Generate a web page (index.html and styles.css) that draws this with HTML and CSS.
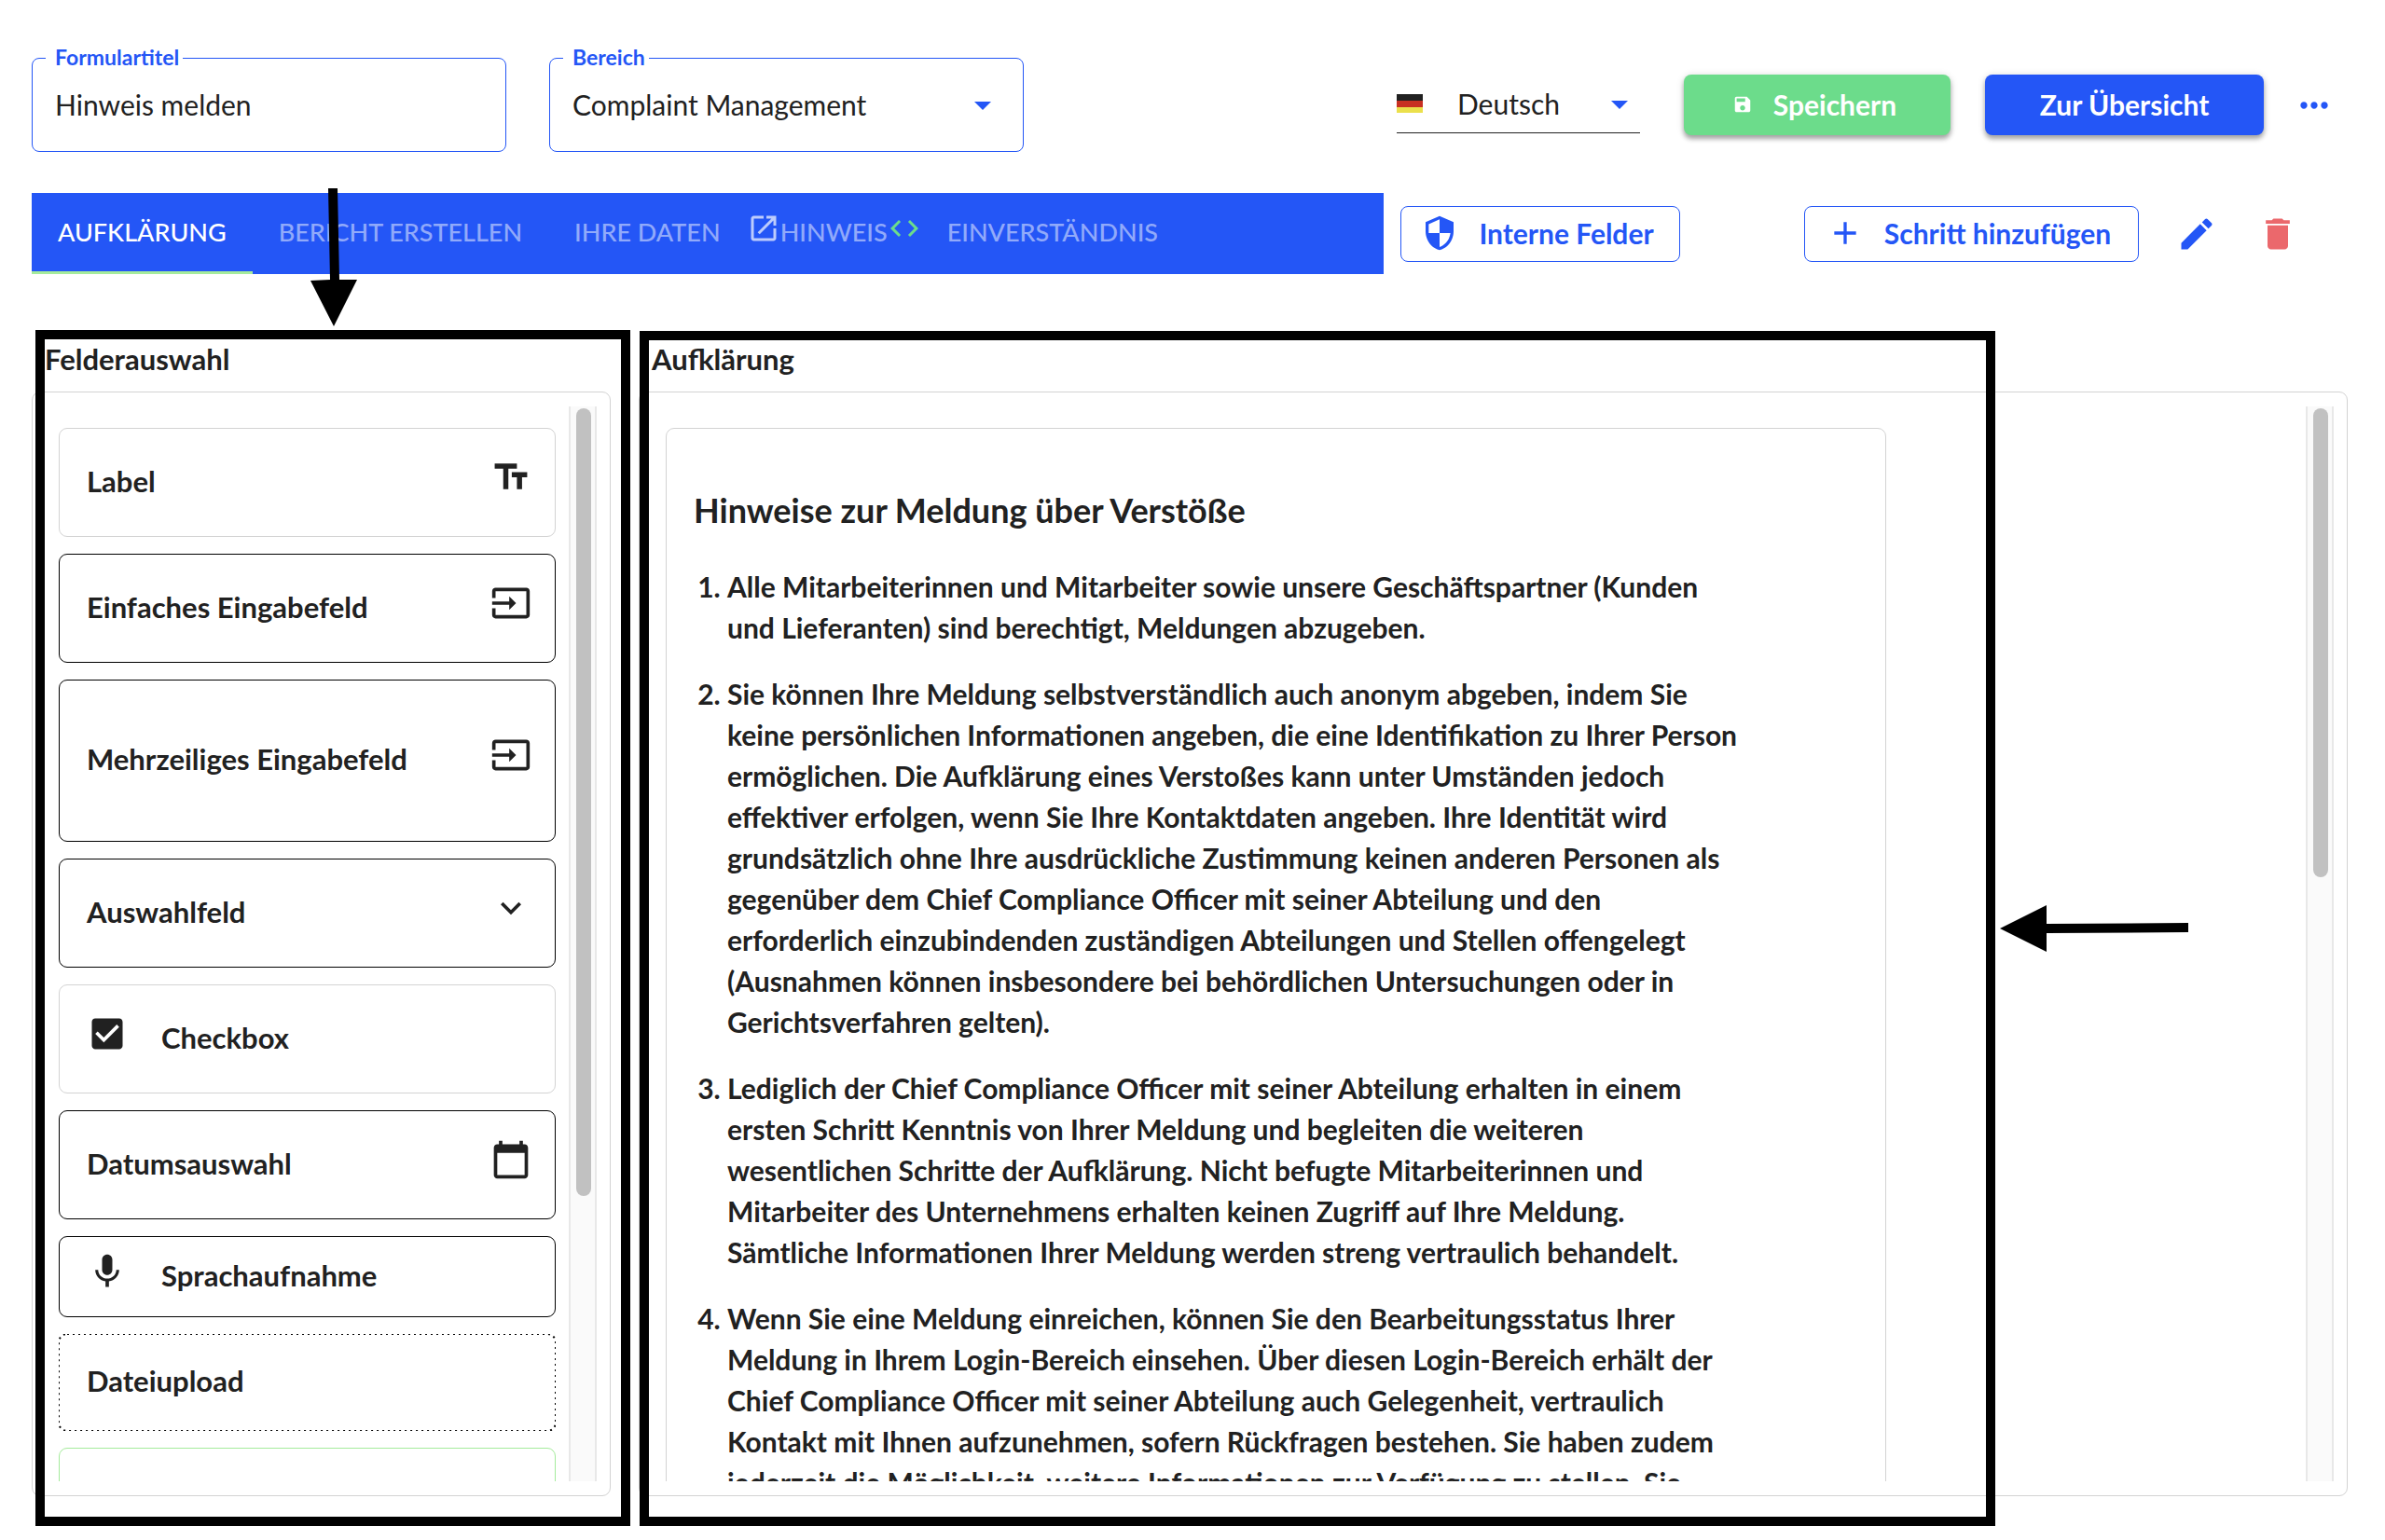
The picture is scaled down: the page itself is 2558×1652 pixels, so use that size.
FILE: index.html
```html
<!DOCTYPE html>
<html lang="de">
<head>
<meta charset="utf-8">
<title>Formular bearbeiten</title>
<link rel="stylesheet" href="styles.css">
</head>
<body>
<svg class="sprite" aria-hidden="true">
  <symbol id="i-input" viewBox="0 0 24 24"><path d="M21 3.01H3c-1.1 0-2 .9-2 2V9h2V4.99h18v14.03H3V15H1v4.01c0 1.1.9 1.98 2 1.98h18c1.1 0 2-.88 2-1.98v-14c0-1.11-.9-2-2-2zM11 16l4-4-4-4v3H1v2h10v3z"/></symbol>
</svg>
<div class="page">
  <header class="topbar">
    <div class="field">
      <label for="title">Formulartitel</label>
      <input id="title" type="text" value="Hinweis melden">
    </div>
    <div class="field field-select">
      <label for="area">Bereich</label>
      <select id="area"><option>Complaint Management</option></select>
    </div>
    <div class="language">
      <svg class="flag" viewBox="0 0 28 20"><path d="M0 0h28v7H0z"/><path fill="#c83022" d="M0 7h28v7H0z"/><path fill="#ebe04c" d="M0 14h28v6H0z"/></svg>
      <select aria-label="Sprache"><option>Deutsch</option></select>
    </div>
    <button class="btn btn-save" type="button">
      <svg viewBox="0 0 24 24"><path d="M17 3H5c-1.11 0-2 .9-2 2v14c0 1.1.89 2 2 2h14c1.1 0 2-.9 2-2V7l-4-4zm-5 16c-1.66 0-3-1.34-3-3s1.34-3 3-3 3 1.34 3 3-1.34 3-3 3zm3-10H5V5h10v4z"/></svg>
      Speichern
    </button>
    <button class="btn btn-primary" type="button">Zur Übersicht</button>
    <button class="icon-btn" type="button" aria-label="Mehr">
      <svg viewBox="0 0 24 24"><path d="M6 10c-1.100 0-2 .9-2 2s.9 2 2 2 2-.9 2-2-.9-2-2-2zm12 0c-1.100 0-2 .9-2 2s.9 2 2 2 2-.9 2-2-.9-2-2-2zm-6 0c-1.100 0-2 .9-2 2s.9 2 2 2 2-.9 2-2-.9-2-2-2z"/></svg>
    </button>
  </header>

  <div class="steps">
    <div class="tabs" role="tablist">
      <button class="tab active" role="tab" aria-selected="true" type="button">AUFKLÄRUNG</button>
      <button class="tab" role="tab" type="button">BERICHT ERSTELLEN</button>
      <button class="tab" role="tab" type="button">IHRE DATEN</button>
      <button class="tab tab-icons" role="tab" type="button">
        <svg viewBox="0 0 24 24"><path d="M19 19H5V5h7V3H5c-1.110 0-2 .9-2 2v14c0 1.100.89 2 2 2h14c1.100 0 2-.9 2-2v-7h-2v7zM14 3v2h3.590l-9.830 9.830 1.410 1.410L19 6.410V10h2V3h-7z"/></svg>
        <span>HINWEIS</span>
        <svg class="code" viewBox="0 0 24 24"><path d="M9.400 16.600L4.800 12l4.600-4.600L8 6l-6 6 6 6 1.400-1.400zm5.200 0l4.600-4.600-4.600-4.600L16 6l6 6-6 6-1.400-1.400z"/></svg>
      </button>
      <button class="tab" role="tab" type="button">EINVERSTÄNDNIS</button>
    </div>
    <button class="btn btn-outline btn-internal" type="button">
      <svg viewBox="0 0 24 24"><path d="M12 1L3 5v6c0 5.550 3.840 10.740 9 12 5.160-1.260 9-6.450 9-12V5l-9-4zm0 10.990h7c-.53 4.120-3.280 7.790-7 8.940V12H5V6.300l7-3.110v8.800z"/></svg>
      Interne Felder
    </button>
    <button class="btn btn-outline btn-add" type="button">
      <svg viewBox="0 0 24 24"><path d="M19 13h-6v6h-2v-6H5v-2h6V5h2v6h6v2z"/></svg>
      Schritt hinzufügen
    </button>
    <button class="icon-btn" type="button" aria-label="Schritt bearbeiten">
      <svg viewBox="0 0 24 24"><path d="M3 17.250V21h3.750L17.810 9.940l-3.750-3.750L3 17.250zM20.710 7.040c.39-.39.39-1.020 0-1.410l-2.340-2.340c-.39-.39-1.020-.39-1.410 0l-1.830 1.830 3.750 3.750 1.830-1.830z"/></svg>
    </button>
    <button class="icon-btn danger" type="button" aria-label="Schritt löschen">
      <svg viewBox="0 0 24 24"><path d="M6 19c0 1.100.9 2 2 2h8c1.100 0 2-.9 2-2V7H6v12zM19 4h-3.500l-1-1h-5l-1 1H5v2h14V4z"/></svg>
    </button>
  </div>

  <main class="editor">
    <section class="column palette">
      <h2>Felderauswahl</h2>
      <div class="panel">
        <div class="scroll">
          <div class="card soft"><span>Label</span><svg viewBox="0 0 24 24"><path d="M2.500 4v3h5v12h3V7h5V4h-13zm19 5h-9v3h3v7h3v-7h3V9z"/></svg></div>
          <div class="card"><span>Einfaches Eingabefeld</span><svg><use href="#i-input"/></svg></div>
          <div class="card tall"><span>Mehrzeiliges Eingabefeld</span><svg><use href="#i-input"/></svg></div>
          <div class="card"><span>Auswahlfeld</span><svg viewBox="0 0 24 24"><path d="M7.410 8.590L12 13.170l4.590-4.580L18 10l-6 6-6-6 1.410-1.410z"/></svg></div>
          <div class="card soft lead"><svg viewBox="0 0 24 24"><path d="M19 3H5c-1.110 0-2 .9-2 2v14c0 1.100.89 2 2 2h14c1.110 0 2-.9 2-2V5c0-1.100-.89-2-2-2zm-9 14l-5-5 1.410-1.410L10 14.170l7.590-7.590L19 8l-9 9z"/></svg><span>Checkbox</span></div>
          <div class="card"><span>Datumsauswahl</span><svg viewBox="0 0 24 24"><path d="M20 3h-1V1h-2v2H7V1H5v2H4c-1.100 0-2 .9-2 2v16c0 1.100.9 2 2 2h16c1.100 0 2-.9 2-2V5c0-1.100-.9-2-2-2zm0 18H4V8h16v13z"/></svg></div>
          <div class="card short lead"><svg viewBox="0 0 24 24"><path d="M12 14c1.660 0 2.990-1.340 2.990-3L15 5c0-1.660-1.340-3-3-3S9 3.340 9 5v6c0 1.660 1.340 3 3 3zm5.300-3c0 3-2.540 5.100-5.300 5.100S6.700 14 6.700 11H5c0 3.410 2.720 6.230 6 6.720V21h2v-3.280c3.280-.48 6-3.300 6-6.720h-1.700z"/></svg><span>Sprachaufnahme</span></div>
          <div class="card upload"><svg class="dots"><rect width="100%" height="100%" rx="9"/></svg><span>Dateiupload</span></div>
          <div class="card accent"></div>
        </div>
        <div class="scrollbar"><div class="thumb" style="height: 73.5%"></div></div>
      </div>
      <div class="frame"></div>
    </section>

    <section class="column preview">
      <h2>Aufklärung</h2>
      <div class="panel">
        <div class="scroll">
          <article class="notice">
            <h3>Hinweise zur Meldung über Verstöße</h3>
            <ol>
              <li>Alle Mitarbeiterinnen und Mitarbeiter sowie unsere Geschäftspartner (Kunden<br>und Lieferanten) sind berechtigt, Meldungen abzugeben.</li>
              <li>Sie können Ihre Meldung selbstverständlich auch anonym abgeben, indem Sie<br>keine persönlichen Informationen angeben, die eine Identifikation zu Ihrer Person<br>ermöglichen. Die Aufklärung eines Verstoßes kann unter Umständen jedoch<br>effektiver erfolgen, wenn Sie Ihre Kontaktdaten angeben. Ihre Identität wird<br>grundsätzlich ohne Ihre ausdrückliche Zustimmung keinen anderen Personen als<br>gegenüber dem Chief Compliance Officer mit seiner Abteilung und den<br>erforderlich einzubindenden zuständigen Abteilungen und Stellen offengelegt<br>(Ausnahmen können insbesondere bei behördlichen Untersuchungen oder in<br>Gerichtsverfahren gelten).</li>
              <li>Lediglich der Chief Compliance Officer mit seiner Abteilung erhalten in einem<br>ersten Schritt Kenntnis von Ihrer Meldung und begleiten die weiteren<br>wesentlichen Schritte der Aufklärung. Nicht befugte Mitarbeiterinnen und<br>Mitarbeiter des Unternehmens erhalten keinen Zugriff auf Ihre Meldung.<br>Sämtliche Informationen Ihrer Meldung werden streng vertraulich behandelt.</li>
              <li>Wenn Sie eine Meldung einreichen, können Sie den Bearbeitungsstatus Ihrer<br>Meldung in Ihrem Login-Bereich einsehen. Über diesen Login-Bereich erhält der<br>Chief Compliance Officer mit seiner Abteilung auch Gelegenheit, vertraulich<br>Kontakt mit Ihnen aufzunehmen, sofern Rückfragen bestehen. Sie haben zudem<br>jederzeit die Möglichkeit, weitere Informationen zur Verfügung zu stellen. Sie</li>
            </ol>
          </article>
        </div>
        <div class="scrollbar"><div class="thumb" style="height: 43.8%"></div></div>
      </div>
      <div class="frame"></div>
    </section>
  </main>

  <svg class="arrow arrow-down" viewBox="0 0 50 148"><path d="M19 0h10l2 98h19L25 148 0 99l21-1z"/></svg>
  <svg class="arrow arrow-left" viewBox="0 0 202 50"><path d="M0 25L50 0v20l152-1v10l-152 1v20z"/></svg>
</div>
</body>
</html>
```

FILE: styles.css
```css
* {
  box-sizing: border-box;
}

:root {
  --blue: #2456f6;
  --ink: #212121;
  --line: #d3d3d3;
}

body {
  margin: 0;
  background: #fff;
  color: var(--ink);
  font-family: Lato, "Open Sans", sans-serif;
  font-size: 30px;
  line-height: 44px;
}

button,
input,
select {
  font: inherit;
  color: inherit;
}

button {
  cursor: pointer;
}

svg {
  fill: currentColor;
  flex: none;
}

.sprite {
  position: absolute;
  width: 0;
  height: 0;
}

.page {
  position: relative;
  display: flex;
  flex-direction: column;
  height: 100vh;
  padding: 62px 40px 47px 34px;
}

/* Top bar */
.topbar {
  display: flex;
  align-items: center;
}

.field {
  position: relative;
  flex: 0 1 509px;
  margin-right: 46px;
}

.field label {
  position: absolute;
  top: -13px;
  left: 15px;
  padding: 0 4px 0 10px;
  background: #fff;
  color: var(--blue);
  font-size: 23px;
  font-weight: 700;
  line-height: 24px;
}

.field input,
.field select {
  display: block;
  width: 100%;
  height: 101px;
  padding: 0 24px 2px;
  border: 1px solid var(--blue);
  border-radius: 8px;
  background: none;
  appearance: none;
}

.field-select::after,
.language::after {
  content: "";
  position: absolute;
  top: 50%;
  right: 35px;
  margin-top: -4px;
  border: 9px solid transparent;
  border-top-color: var(--blue);
  border-bottom: 0;
  pointer-events: none;
}

.language {
  position: relative;
  display: flex;
  align-items: center;
  width: 261px;
  height: 60px;
  margin-left: auto;
  margin-right: 47px;
  padding-bottom: 3px;
  border-bottom: 1px solid var(--ink);
}

.language::after {
  right: 13px;
}

.language select {
  flex: 1;
  height: 56px;
  padding: 0 0 0 37px;
  border: 0;
  background: none;
  appearance: none;
}

.flag {
  width: 28px;
  height: 20px;
}

.btn {
  display: flex;
  align-items: center;
  justify-content: center;
  padding: 0 0 2px;
  border: 0;
  border-radius: 8px;
  font-weight: 700;
  white-space: nowrap;
}

.btn-save,
.btn-primary {
  height: 65px;
  color: #fff;
  box-shadow: 0 4px 5px rgba(0, 0, 0, .3), 0 1px 8px rgba(0, 0, 0, .14);
}

.btn-save {
  width: 286px;
  gap: 22px;
  margin-right: 37px;
  padding-right: 6px;
  background: #6cdc8b;
}

.btn-save svg {
  width: 22px;
  height: 22px;
}

.btn-primary {
  width: 299px;
  margin-right: 32px;
  background: var(--blue);
}

.icon-btn {
  width: 44px;
  height: 44px;
  padding: 0;
  border: 0;
  background: none;
  color: var(--blue);
}

.icon-btn svg {
  display: block;
  width: 44px;
  height: 44px;
}

.topbar .icon-btn {
  margin-right: 14px;
}

/* Step tabs */
.steps {
  display: flex;
  align-items: center;
  margin-top: 44px;
}

.tabs {
  display: flex;
  flex: 0 1 1450px;
  height: 87px;
  background: var(--blue);
}

.tab {
  padding: 0 28px;
  border: 0;
  border-bottom: 3px solid transparent;
  background: none;
  color: rgba(255, 255, 255, .5);
  font-size: 27px;
  font-weight: 500;
  white-space: nowrap;
}

.tab.active {
  border-color: #a5eb9c;
  color: #fff;
}

.tab-icons {
  display: flex;
  align-items: center;
  padding: 0;
}

.tab-icons svg {
  width: 36px;
  height: 36px;
  margin-bottom: 8px;
  color: rgba(255, 255, 255, .7);
}

.tab-icons .code {
  color: #6cdc8b;
}

.btn-outline {
  height: 60px;
  padding-right: 6px;
  border: 1px solid var(--blue);
  background: #fff;
  color: var(--blue);
}

.btn-internal {
  width: 300px;
  gap: 22px;
  margin-left: 18px;
}

.btn-outline svg {
  width: 40px;
  height: 40px;
}

.btn-add {
  width: 359px;
  gap: 22px;
  margin-left: auto;
  margin-right: 40px;
}

.danger {
  margin: 0 53px 0 43px;
  color: #eb686c;
}

/* Editor columns */
.editor {
  display: flex;
  flex: 1;
  gap: 30px;
  min-height: 0;
  margin-top: 60px;
}

.column {
  position: relative;
  display: flex;
  flex-direction: column;
  min-width: 0;
}

.palette {
  flex: 0 0 25%;
}

.preview {
  flex: 1;
}

h2 {
  margin: 0;
  padding: 9px 14px 13px;
  font-size: 31px;
  line-height: 44px;
}

.panel {
  display: flex;
  flex: 1;
  min-height: 0;
  padding: 15px 14px 15px 28px;
  border: 1px solid var(--line);
  border-radius: 9px;
}

.scroll {
  flex: 1;
  min-width: 0;
  overflow: hidden;
  padding: 23px 14px 0 0;
}

.scrollbar {
  width: 30px;
  padding: 2px 4px 2px 6px;
  border: solid #e8e8e8;
  border-width: 0 2px;
  background: #fafafa;
}

.thumb {
  border-radius: 8px;
  background: #c1c1c1;
}

.card {
  position: relative;
  display: flex;
  align-items: center;
  justify-content: space-between;
  height: 117px;
  margin-bottom: 18px;
  padding: 0 25px 0 29px;
  border: 1px solid #000;
  border-radius: 9px;
  font-size: 31px;
  font-weight: 700;
}

.card svg {
  width: 44px;
  height: 44px;
  margin-bottom: 12px;
}

.card span {
  margin-bottom: 4px;
}

.card.soft {
  height: 117px;
  border-color: var(--line);
}

.card.tall {
  height: 174px;
}

.card.short {
  height: 87px;
}

.card.lead {
  justify-content: flex-start;
  gap: 36px;
}

.card.upload {
  height: 104px;
  padding-left: 30px;
  border: 0;
}

/* Widely spaced dotted outline; the svg clips the outer half of the stroke */
.card .dots {
  position: absolute;
  inset: 0;
  width: 100%;
  height: 100%;
  margin: 0;
  fill: none;
  stroke: #000;
  stroke-width: 2px;
  stroke-dasharray: 2 4;
}

.card.accent {
  border-color: #a5eb9c;
}

.notice {
  max-width: 1309px;
  padding: 59px 29px;
  border: 1px solid var(--line);
  border-radius: 9px;
}

.notice h3 {
  margin: 0 0 32px;
  font-size: 36px;
  line-height: 56px;
}

.notice ol {
  margin: 0;
  padding-left: 36px;
  font-weight: 700;
}

.notice li {
  margin-bottom: 27px;
  white-space: nowrap;
}

/* Annotations over the screen */
.frame {
  position: absolute;
  inset: 0 -21px -32px 4px;
  border: 10px solid #000;
  pointer-events: none;
}

.preview .frame {
  inset: 1px 378px -32px 1px;
}

.arrow {
  position: absolute;
  fill: #000;
  pointer-events: none;
}

.arrow-down {
  top: 202px;
  left: 333px;
  width: 50px;
  height: 148px;
}

.arrow-left {
  top: 971px;
  right: 211px;
  width: 202px;
  height: 50px;
}
```
